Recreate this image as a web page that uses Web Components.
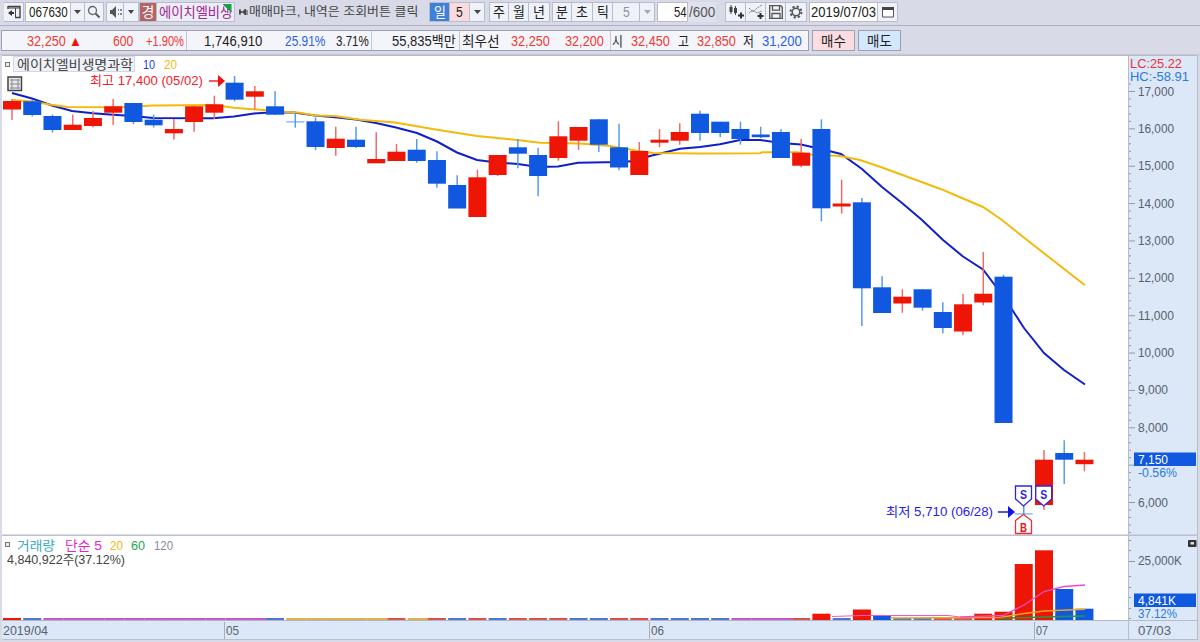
<!DOCTYPE html>
<html lang="ko">
<head>
<meta charset="utf-8">
<title>에이치엘비생명과학</title>
<style>
    html, body { margin: 0; height: 100%; overflow: hidden; }
    body { font: 14px/16px "Liberation Sans", "Noto Sans CJK KR", sans-serif; color: #222; }
</style>
</head>
<body>
<stock-window></stock-window>

<template id="toolbar-template">
    <style>
        :host { display: flex; box-sizing: border-box; height: 26px; padding: 2px 0 0 4px; background: #d8dbe7; border-bottom: 1px solid #adb0c0; }
        svg { display: block; overflow: visible; }
        .scroll { display: flex; align-items: center; height: 20px; margin-left: 4px; color: #444; }
    </style>
    <tool-box w="20"><svg width="14" height="14" viewBox="0 0 14 14"><path d="M1 1.5h12v11H8M1 1v3" fill="none" stroke="#444" stroke-width="1.4"/><path d="M1 3h12M8.5 3v9" stroke="#444"/><path d="M1 8l4-3v2h2v2H5v2z" fill="#333"/></svg></tool-box>
    <tool-box w="46" text="067630" tw="39" bg="#fff" gap="1"></tool-box>
    <tool-box w="14"><svg width="7" height="4"><path d="M0 0h7L3.500 4z" fill="#444"/></svg></tool-box>
    <tool-box w="19"><svg width="14" height="14" viewBox="0 0 14 14"><circle cx="5.500" cy="5.500" r="4" fill="none" stroke="#666" stroke-width="1.300"/><path d="M8.500 8.500l4 4" stroke="#555" stroke-width="1.800"/></svg></tool-box>
    <tool-box w="18" gap="2"><svg width="13" height="12" viewBox="0 0 13 12"><path d="M1 4h2l4-4v12L3 8H1z" fill="#555"/><path d="M9 4h1M9 8h1M11 4h2M11 8h2" stroke="#666" stroke-width="1.400"/></svg></tool-box>
    <tool-box w="15"><svg width="6" height="4"><path d="M0 0h6L3 4z" fill="#444"/></svg></tool-box>
    <tool-box w="18" text="경" tw="13" bg="#b46464" color="#fff" gap="0"></tool-box>
    <tool-box w="78" bg="#eceef6" left><stock-name></stock-name></tool-box>
    <div class="scroll">
        <svg width="10" height="9" viewBox="0 0 10 9"><path d="M1 1v6M0 2l3 2-3 2M3.500 4l3-3v6zM8 2v5" stroke="#444" fill="#444"/></svg>
        <fit-text w="169" size="12.500">매매마크, 내역은 조회버튼 클릭</fit-text>
    </div>
    <tool-box w="21" text="일" tw="12" bg="#3f80d8" color="#fff" gap="11"></tool-box>
    <tool-box w="20" text="5" tw="7" bg="#f9dade"></tool-box>
    <tool-box w="15"><svg width="7" height="4"><path d="M0 0h7L3.500 4z" fill="#444"/></svg></tool-box>
    <tool-box w="20" text="주" tw="12" gap="4"></tool-box>
    <tool-box w="20" text="월" tw="12"></tool-box>
    <tool-box w="21" text="년" tw="12"></tool-box>
    <tool-box w="20" text="분" tw="12" gap="2"></tool-box>
    <tool-box w="21" text="초" tw="12"></tool-box>
    <tool-box w="20" text="틱" tw="12"></tool-box>
    <tool-box w="27" text="5" tw="7" color="#8e919c"></tool-box>
    <tool-box w="15"><svg width="7" height="4"><path d="M0 0h7L3.500 4z" fill="#a3a6b2"/></svg></tool-box>
    <tool-box w="31" text="54" tw="13" bg="#fff" gap="2" right></tool-box>
    <tool-box w="28" text="/600" tw="26" bg="#dfe2ec" color="#555" plain></tool-box>
    <tool-box w="21" gap="9"><svg width="16" height="16" viewBox="0 0 16 16"><path d="M3 1v9M7.500 2v9" stroke="#444"/><path d="M1.500 3h3v5h-3zM6 4h3v5H6z" fill="#444"/><path d="M13 8.500v6M10 11.500h6" stroke="#333" stroke-width="2"/></svg></tool-box>
    <tool-box w="20"><svg width="16" height="16" viewBox="0 0 16 16"><path d="M1 4l4 4 4-4 5-3" fill="none" stroke="#777" stroke-dasharray="2 1"/><path d="M1 9l4-3 4 3 5-2" fill="none" stroke="#999"/><path d="M12.500 9v6M9.500 12h6" stroke="#333" stroke-width="2"/></svg></tool-box>
    <tool-box w="20"><svg width="14" height="14" viewBox="0 0 14 14"><path d="M.700.700h11l1.600 1.600v11H.700zM3.500.700v4.500h7V.700M3 13V8.500h8V13" fill="none" stroke="#555" stroke-width="1.300"/></svg></tool-box>
    <tool-box w="21"><svg width="14" height="14" viewBox="0 0 14 14"><circle cx="7" cy="7" r="5.500" fill="none" stroke="#555" stroke-width="2" stroke-dasharray="2.200 2.120"/><circle cx="7" cy="7" r="3.800" fill="none" stroke="#555" stroke-width="1.500"/></svg></tool-box>
    <tool-box w="69" text="2019/07/03" tw="65" bg="#fff" gap="2"></tool-box>
    <tool-box w="20"><svg width="12" height="12" viewBox="0 0 12 12"><path d="M.500 1.500h11v9.500H.500z" fill="#fff" stroke="#555"/><path d="M0 2.500h12" stroke="#444" stroke-width="3"/></svg></tool-box>
</template>

<template id="window-template">
    <style>
        :host { display: flex; flex-direction: column; width: 1200px; height: 642px; background: #d8dbe7; }
        .charts { display: grid; grid-template: 480px 85px 19px / 1126px 70px; margin: 0 2px; border-top: 1px solid #b8bac8; }
        .charts > * { min-width: 0; min-height: 0; }
    </style>
    <chart-toolbar></chart-toolbar>
    <quote-bar></quote-bar>
    <div class="charts">
        <price-plot></price-plot>
        <price-axis></price-axis>
        <volume-plot></volume-plot>
        <volume-axis></volume-axis>
        <date-strip></date-strip>
        <date-corner></date-corner>
    </div>
</template>

<script>
const UP = '#ee1505';
const DOWN = '#1058e0';
const UP_WICK = '#f26a66';
const DOWN_WICK = '#559bec';

// [direction, body top, body bottom, high, low] in window pixels, one per trading day
const CANDLES = [
    ['u', 101, 109.5, 99, 120], ['d', 101.3, 115, 100, 116.5], ['d', 116, 130, 114.5, 132.5],
    ['u', 124.7, 130, 114.5, 130], ['u', 118, 126, 111, 127.5], ['u', 106.3, 112.7, 99, 125],
    ['d', 103, 122, 103, 124], ['d', 119.7, 125.3, 114.5, 127.5], ['u', 129, 133.3, 119, 139.5],
    ['u', 106.3, 122, 106, 131.7], ['u', 104.3, 112.7, 95.7, 119], ['d', 82.7, 99.7, 76, 101.3],
    ['u', 91.3, 96.7, 86, 109.5], ['d', 106.3, 114.7, 91.3, 115], ['d', 121.4, 122.4, 113.5, 127.7],
    ['d', 121.3, 147, 117.5, 150], ['u', 138.7, 148, 126.7, 155.7], ['d', 139.7, 147, 126.7, 148],
    ['u', 159, 163.3, 132.3, 163], ['u', 151.7, 161, 144, 161], ['d', 149.7, 161, 139, 162.7],
    ['d', 160, 183.7, 151.3, 187.7], ['d', 185, 208.5, 175.3, 208], ['u', 177.3, 217, 169.7, 217],
    ['u', 155, 175, 155, 176], ['d', 147.3, 153.7, 139, 168.3], ['d', 155, 176, 147.7, 196.3],
    ['u', 136.3, 158, 121.3, 160.7], ['u', 127, 140.7, 127, 150], ['d', 119.3, 144.7, 119.3, 152],
    ['d', 147.3, 167.5, 123.7, 170.3], ['u', 151, 175, 142, 175], ['u', 139.7, 142.7, 129, 147.3],
    ['u', 132, 140.7, 123.3, 144.7], ['d', 113.7, 133, 110.7, 140.7], ['d', 121.7, 133, 121.7, 137.3],
    ['d', 129, 139, 121.7, 144.7], ['d', 134.5, 137.2, 126.7, 138], ['d', 132, 158, 129, 158],
    ['u', 152.7, 165.7, 139, 167.3], ['d', 129, 208.3, 119.3, 221.3], ['u', 203.5, 206.5, 179.7, 213.7],
    ['d', 202.3, 288.3, 198, 326], ['d', 287.3, 313, 276.3, 313], ['u', 296.7, 303.5, 289.3, 312.7],
    ['d', 289.3, 307.7, 289.3, 310.7], ['d', 312, 328, 302.3, 333.3], ['u', 304.3, 331.5, 294, 335.3],
    ['u', 293.7, 302.5, 252, 305.3], ['d', 276.7, 423, 274.7, 423], ['d', 513.4, 514.4, 506, 515],
    ['u', 459.7, 505, 450, 510], ['d', 453, 459.7, 440.3, 484], ['u', 459.7, 464.2, 452, 471.3]
];

const MA10 = '12,93 32,98.5 52,105.5 72,111 93,113.3 113,114.7 133,116 153,118 200,118.3 213,118.2 234,116.5 254,113.5 270,112.5 294,112.5 315,115.5 335,117.3 356,119.5 376,123 396,127.5 417,133 437,141.5 457,152.5 477,160 497,162.5 518,164 538,167 558,166.5 578,162.7 619,162 635,161 650,156 680,148.7 700,147 720,144.3 740,140 760,140 781,143 801,144.5 821,149 841,154 862,169 882,187 902,203 922,220 943,240 963,256.5 983,269.500 1003,296 1013,311 1024,328 1044,353 1064,370 1085,384.500';
const MA20 = '12,100 32,101.500 48,104.300 67,107 120,107.300 153,105.500 213,105 234,107.800 257,109.500 287,112 300,112.700 315,115.500 335,116 360,119.700 395,122.500 437,129.700 477,136 517,140 540,142.700 580,143.500 610,146 637,150.700 653,153 700,153.500 760,153.300 762,152.300 797,152.300 812,154.700 840,156 860,160 880,166.700 940,188.700 963,198.500 983,207 1002,220 1027,240 1085,285.300';

// [colour, top] of the volume bars that rise over the bottom line
const VOLUMES = {
    40: [UP, 613.7], 42: [UP, 609.5], 43: [DOWN, 615.5], 44: ['#4b78cc', 618], 45: ['#4b78cc', 618],
    46: ['#d8524a', 618], 47: ['#d8524a', 618], 48: [UP, 613.7], 49: [UP, 611.7], 50: [UP, 564],
    51: [UP, 550.3], 52: [DOWN, 589], 53: [DOWN, 608.7]
};

const centre = i => 12 + 20.235 * i;

/** SVG text that is stretched to a given width. */
function label(text, x, y, width, color, size = 13.5, extra = '') {
    return `<text x="${x}" y="${y}" textLength="${width}" lengthAdjust="spacingAndGlyphs" fill="${color}" font-size="${size}" ${extra}>${text}</text>`;
}

/** Base for the chart parts: an SVG whose coordinates are those of the window. */
class ChartPart extends HTMLElement {
    constructor() {
        super();
        this.attachShadow({ mode: 'open' });
        const [x, y, w, h] = this.box;
        this.shadowRoot.innerHTML = `
            <style>
                :host { display: block; overflow: hidden; background: ${this.background}; }
                svg { display: block; }
            </style>
            <svg width="${w}" height="${h}" viewBox="${x} ${y} ${w} ${h}">${this.draw()}</svg>
        `;
    }
    get background() { return '#fff'; }
}

/** Inline text, squeezed or widened to the width in its "w" attribute. */
class FitText extends HTMLElement {
    constructor() {
        super();
        this.attachShadow({ mode: 'open' });
        this.shadowRoot.innerHTML = `
            <style>
                :host { display: block; flex: none; white-space: nowrap; }
                span { display: inline-block; transform-origin: 0 50%; }
            </style>
            <span><slot></slot></span>
        `;
    }

    connectedCallback() {
        const width = Number(this.getAttribute('w'));
        const span = this.shadowRoot.querySelector('span');
        this.style.width = width + 'px';
        this.style.fontSize = (this.getAttribute('size') || 14) + 'px';
        span.style.transform = `scaleX(${width / span.offsetWidth})`;
    }
}

/** One cell of the toolbar: a text or an icon in a thin frame. */
class ToolBox extends HTMLElement {
    constructor() {
        super();
        this.attachShadow({ mode: 'open' });
    }

    connectedCallback() {
        const text = this.getAttribute('text');
        const align = this.hasAttribute('left') ? 'flex-start' : this.hasAttribute('right') ? 'flex-end' : 'center';
        this.shadowRoot.innerHTML = `
            <style>
                :host {
                    display: flex; flex: none; align-items: center; justify-content: ${align};
                    box-sizing: border-box; height: 20px; width: ${this.getAttribute('w')}px;
                    margin-left: ${this.getAttribute('gap') || 0}px;
                    background: ${this.getAttribute('bg') || '#f0f2f9'};
                    color: ${this.getAttribute('color') || '#222'};
                    border: 1px solid ${this.hasAttribute('plain') ? 'transparent' : '#b9bccb'};
                    border-left-width: ${this.hasAttribute('gap') ? 1 : 0}px;
                }
            </style>
            ${text ? `<fit-text w="${this.getAttribute('tw')}">${text}</fit-text>` : '<slot></slot>'}
        `;
    }
}

/** Stock name with the green corner mark over its right end. */
class StockName extends HTMLElement {
    constructor() {
        super();
        this.attachShadow({ mode: 'open' });
        this.shadowRoot.innerHTML = `
            <style>
                :host { display: block; position: relative; width: 76px; height: 18px; color: #a1268f; }
                fit-text { margin: 1px 0 0 2px; }
                svg { position: absolute; right: 0; top: 1px; }
            </style>
            <fit-text w="73">에이치엘비생</fit-text>
            <svg width="11" height="9"><path d="M1 0h8v7L6 5l-1-1zM4 1l6 7" fill="#16a04a" stroke="#16a04a"/></svg>
        `;
    }
}

class ChartToolbar extends HTMLElement {
    constructor() {
        super();
        this.attachShadow({ mode: 'open' });
        this.shadowRoot.append(document.getElementById('toolbar-template').content.cloneNode(true));
    }
}

class QuoteBar extends HTMLElement {
    constructor() {
        super();
        this.attachShadow({ mode: 'open' });
        const red = '#ef3a32';
        const blue = '#2b62df';
        // [text, gap before, width, colour]; a null text is a divider
        const cells = [
            ['32,250', 25, 39, red], ['▲', 3, 13, '#ee1505'], ['600', 31, 20, red], ['+1.90%', 13, 38, red],
            [null, 2], ['1,746,910', 17, 58], ['25.91%', 23, 40, blue], ['3.71%', 11, 33],
            [null, 2], ['55,835백만', 20, 64], [null, 3], ['최우선', 2, 38], ['32,250', 11, 39, red],
            ['32,200', 15, 39, red], [null, 6], ['시', 1, 11], ['32,450', 8, 39, red],
            ['고', 8, 11], ['32,850', 8, 39, red], ['저', 7, 11], ['31,200', 8, 40, blue]
        ];
        this.shadowRoot.innerHTML = `
            <style>
                :host { display: flex; align-items: flex-start; box-sizing: border-box; height: 29px; padding: 4px 0 0 1px; border-bottom: 1px solid #c5c7d4; }
                .quotes, .order { display: flex; align-items: center; box-sizing: border-box; height: 21px; border: 1px solid #9da0b0; }
                .quotes { width: 808px; background: #f4f5fa; }
                .order { justify-content: center; width: 43px; margin-left: 3px; }
                .sell { background: #d3e8fd; }
                .buy { background: #fadce1; }
                i { flex: none; width: 1px; height: 19px; background: #c4c7d4; }
            </style>
            <div class="quotes">
                ${cells.map(([text, gap, w, color = '#222']) => text === null
                    ? `<i style="margin-left:${gap}px"></i>`
                    : `<fit-text w="${w}" style="margin-left:${gap}px;color:${color}">${text}</fit-text>`).join('')}
            </div>
            <div class="order buy"><fit-text w="25">매수</fit-text></div>
            <div class="order sell"><fit-text w="25">매도</fit-text></div>
        `;
    }
}

class PricePlot extends ChartPart {
    get box() { return [2, 56, 1126, 480]; }

    candles() {
        return CANDLES.map(([dir, top, bottom, high, low], i) => {
            const x = centre(i);
            const flat = bottom - top <= 1.1;
            return `<path d="M${x} ${high}V${low}" stroke="${dir === 'u' ? UP_WICK : DOWN_WICK}" stroke-width="1.5"/>
                <rect x="${x - 9}" y="${top}" width="18" height="${bottom - top}" fill="${dir === 'u' ? UP : flat ? DOWN_WICK : DOWN}"/>`;
        }).join('');
    }

    draw() {
        return `
            <polyline points="${MA10}" fill="none" stroke="#1020c8" stroke-width="2"/>
            <polyline points="${MA20}" fill="none" stroke="#f5b90c" stroke-width="2"/>
            ${this.candles()}
            <path d="M2 535.300h1126" stroke="#bcc0ce" stroke-width="1.500"/>
            <rect x="5.500" y="62.500" width="4" height="4" fill="#eee" stroke="#777"/>
            <rect x="13.500" y="56.500" width="121" height="15" fill="#f0f2f9" stroke="#d5d8e4"/>
            ${label('에이치엘비생명과학', 17, 69, 116, '#444', 13)}
            ${label('10', 143, 69, 12, '#2140d8')}
            ${label('20', 164, 69, 13, '#f5b90c')}
            <rect x="8" y="77" width="13.500" height="13.500" fill="#e6e8ee" stroke="#444" stroke-width="1.500"/>
            <path d="M10 80h10M10 84h10M10 88h10M12 79v10M18 79v10" stroke="#888"/>
            ${label('최고 17,400 (05/02)', 90, 84.5, 113, '#f5202c', 13)}
            <path d="M209 81h11" stroke="#f5202c" stroke-width="1.500"/><path d="M218 75l7 6-7 6z" fill="#f01010"/>
            ${label('최저 5,710 (06/28)', 886, 515.500, 107, '#2a20e8', 13)}
            <path d="M998 512h12" stroke="#2018e0" stroke-width="1.500"/><path d="M1008 506l7 6-7 6z" fill="#1414e0"/>
            ${this.marker(1023.5, 'S', '#2c24e0')}
            ${this.marker(1043.7, 'S', '#2c24e0')}
            <path d="M1015.500 533.500v-13l8-6 8 6v13z" fill="#fff" stroke="#f03030" stroke-width="1.300"/>
            ${label('B', 1020, 531.5, 7, '#ee1515', 12, 'font-weight="bold"')}
        `;
    }

    /** Shield that points down at the day of a sale. */
    marker(x, text, color) {
        return `<path d="M${x - 8} 486h16v13l-8 7-8-7z" fill="#fff" stroke="${color}" stroke-width="1.3"/>
            ${label(text, x - 3.5, 499, 7, color, 12, 'font-weight="bold"')}`;
    }
}

class PriceAxis extends ChartPart {
    get box() { return [1128, 56, 70, 480]; }
    get background() { return '#dce8f8'; }

    draw() {
        let out = '<path d="M1128.500 56v480M1197.500 56v480" stroke="#b6bccb"/>';
        for (let i = -1; i <= 59; i++) {
            const y = 91.5 + i * 7.473;
            out += `<path d="M1129 ${y}h${i % 5 === 0 ? 6 : 2}" stroke="#9098a8"/>`;
            // the last price covers the 7,000 label
            if (i % 5 === 0 && i !== 50 && i <= 55) {
                out += label((17 - i / 5) + ',000', 1138, y + 4, i / 5 < 8 ? 36 : 30, '#5a606e');
            }
        }
        return `
            ${out}
            <path d="M1128 535.300h70" stroke="#bcc0ce" stroke-width="1.500"/>
            ${label('LC:25.22', 1130, 68, 52, '#e83036', 12.5)}
            ${label('HC:-58.91', 1130, 81, 59, '#2878e0', 12.5)}
            <rect x="1134" y="452.500" width="62" height="13.500" fill="#1058e0"/>
            ${label('7,150', 1138, 463.5, 30, '#fff', 12.5)}
            ${label('-0.56%', 1138, 476.5, 39, '#2878e0', 12.5)}
        `;
    }
}

class VolumePlot extends ChartPart {
    get box() { return [2, 536, 1126, 85]; }

    /** Flat sessions, where the average lines cover most of the bars. */
    baseColor(i) {
        if (i < 2) return i ? '#4b78cc' : UP;
        if (i < 13) return '#c957c5';
        if (i === 13) return '#4b78cc';
        if (i < 19 || i === 20) return '#d9b348';
        if (i > 35 && i < 39) return '#c957c5';
        // colour follows the change of volume, not that of the price
        return [19, 21, 23, 25, 26, 27, 30, 31, 39].includes(i) ? '#d8524a' : '#4b78cc';
    }

    draw() {
        const bars = CANDLES.map((candle, i) => {
            const [color, top] = VOLUMES[i] || [this.baseColor(i), 618];
            const wide = /c957c5|d9b348/.test(color);
            return `<rect x="${centre(i) - 9}" y="${top}" width="${wide ? 20.3 : 18}" height="${620 - top}" fill="${color}"/>`;
        }).join('');
        return `
            ${bars}
            <path d="M832 616.500L862 615.500 948 615.500 960 617" fill="none" stroke="#ed55dc"/>
            <path d="M890 618L1000 617.500 1024 613.500 1044 611 1085 609.300" fill="none" stroke="#f0a51c" stroke-width="1.500"/>
            <path d="M1000 618.500L1040 617 1085 616" fill="none" stroke="#1e9a48" stroke-width="1.500"/>
            <path d="M960 617L1003 615.500 1024 605 1044 591.500 1064 586.500 1085 585" fill="none" stroke="#ed4bd4" stroke-width="1.300"/>
            <path d="M2 620.500h1126" stroke="#b1b5c6"/>
            <rect x="5.500" y="542.500" width="4" height="4" fill="#eee" stroke="#777"/>
            ${label('거래량', 17, 549.5, 38, '#39a9c0', 13)}
            ${label('단순 5', 65, 549.5, 37, '#e620d0', 13)}
            ${label('20', 110, 549.5, 13, '#f5b90c')}
            ${label('60', 131, 549.5, 14, '#18a850')}
            ${label('120', 154, 549.5, 19, '#858a9c')}
            ${label('4,840,922주(37.12%)', 7, 563.5, 118, '#444', 13)}
        `;
    }
}

class VolumeAxis extends ChartPart {
    get box() { return [1128, 536, 70, 85]; }
    get background() { return '#dce8f8'; }

    draw() {
        const ticks = [540, 550, 561, 576, 587, 597, 608, 618]
            .map(y => `<path d="M1129 ${y}.5h${y === 561 ? 6 : 2}" stroke="#9098a8"/>`).join('');
        return `
            <path d="M1128.500 536v85M1197.500 536v85M1128 620.500h70" stroke="#b6bccb"/>
            ${ticks}
            <rect x="1188" y="540" width="8.500" height="7" rx="1" fill="#333"/>
            <rect x="1190.500" y="542" width="3.500" height="2.500" fill="#ddd"/>
            ${label('25,000K', 1138, 565, 44, '#5a606e')}
            <rect x="1134" y="593.500" width="62" height="13.500" fill="#1058e0"/>
            ${label('4,841K', 1138, 604.5, 38, '#fff', 12.5)}
            ${label('37.12%', 1138, 617.5, 39, '#2878e0', 12.5)}
        `;
    }
}

class DateStrip extends ChartPart {
    get box() { return [2, 621, 1126, 19]; }
    get background() { return '#dce8f8'; }

    draw() {
        return `
            <path d="M224.500 622v18M649.500 622v18M1034.500 622v18" stroke="#a5adbf"/>
            ${label('2019/04', 3, 635, 45, '#5a606e')}
            ${label('05', 226, 635, 13, '#5a606e')}
            ${label('06', 651, 635, 13, '#5a606e')}
            ${label('07', 1036, 635, 12, '#5a606e')}
            <path d="M2 639.500h1126" stroke="#b9bfcd"/>
        `;
    }
}

class DateCorner extends ChartPart {
    get box() { return [1128, 621, 70, 19]; }
    get background() { return '#dce8f8'; }

    draw() {
        return `
            <path d="M1128.500 621v19M1197.500 621v19M1128 639.500h70" stroke="#b6bccb"/>
            ${label('07/03', 1138, 635, 33, '#5a606e')}
        `;
    }
}

class StockWindow extends HTMLElement {
    constructor() {
        super();
        this.attachShadow({ mode: 'open' });
        this.shadowRoot.append(document.getElementById('window-template').content.cloneNode(true));
    }
}

customElements.define('fit-text', FitText);
customElements.define('stock-name', StockName);
customElements.define('tool-box', ToolBox);
customElements.define('chart-toolbar', ChartToolbar);
customElements.define('quote-bar', QuoteBar);
customElements.define('price-plot', PricePlot);
customElements.define('price-axis', PriceAxis);
customElements.define('volume-plot', VolumePlot);
customElements.define('volume-axis', VolumeAxis);
customElements.define('date-strip', DateStrip);
customElements.define('date-corner', DateCorner);
customElements.define('stock-window', StockWindow);
</script>
</body>
</html>
